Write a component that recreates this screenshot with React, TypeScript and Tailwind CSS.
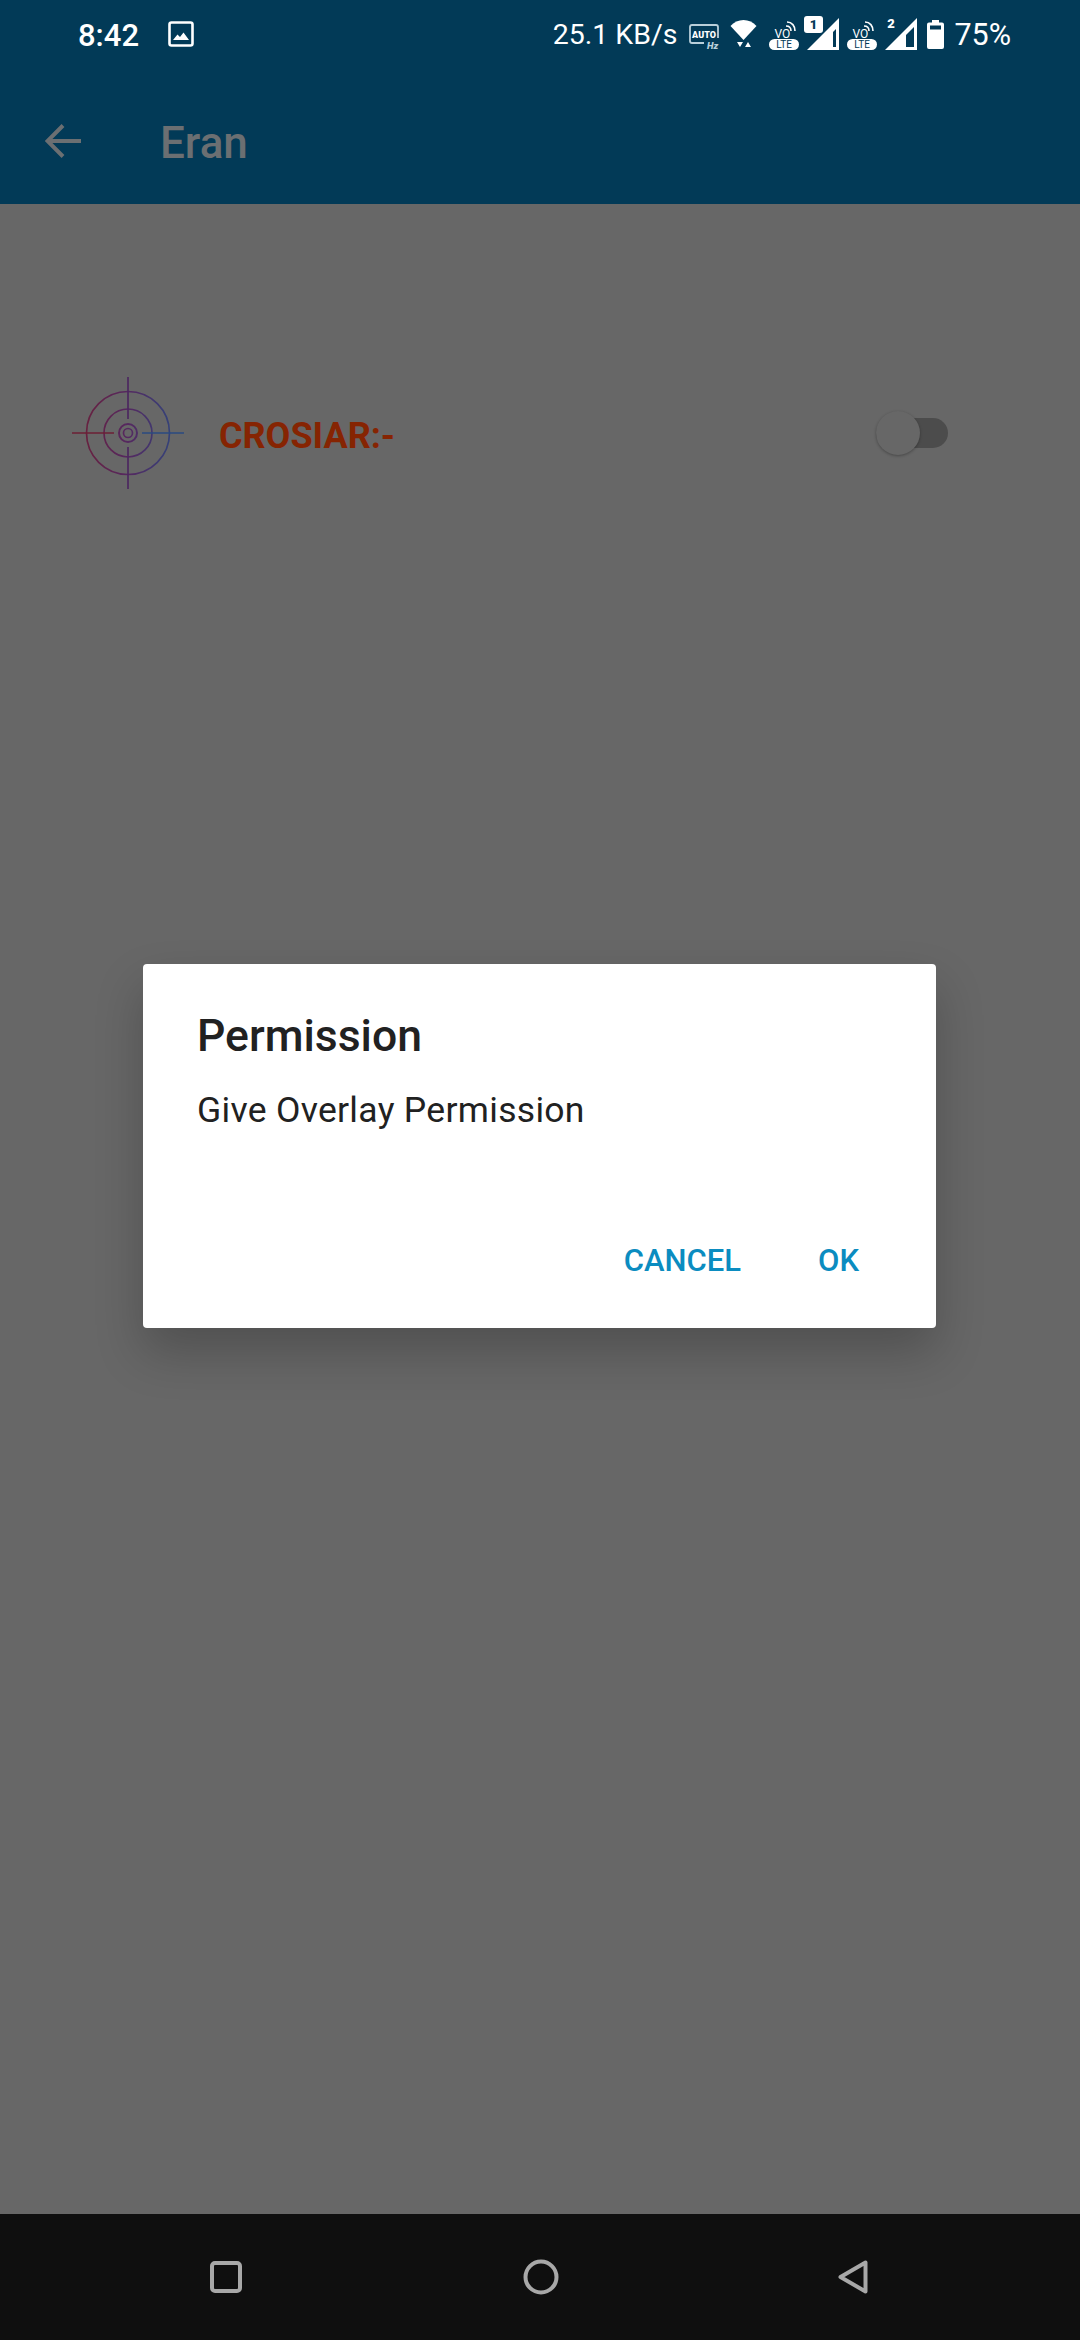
const roboto = "font-['Roboto',sans-serif]"

function ImageIcon() {
  return (
    <svg width="26" height="26" viewBox="0 0 26 26" fill="none">
      <rect x="1.5" y="1.5" width="23" height="23" rx="2" stroke="white" strokeWidth="2.6" />
      <path d="M5 19 L9.5 13.5 L12 16 L15.5 11.5 L21 19 Z" fill="white" />
    </svg>
  )
}

function AutoHzIcon() {
  return (
    <svg width="30" height="25" viewBox="0 0 30 25" fill="none">
      <path d="M15 19 H3 Q1 19 1 17 V3 Q1 1 3 1 H27 Q29 1 29 3 V14" stroke="#b9cfda" strokeWidth="1.8" />
      <text x="15" y="13.5" textAnchor="middle" fontSize="9" fontWeight="900" fontFamily="Roboto" fill="white">AUTO</text>
      <text x="18" y="24.5" fontSize="9.5" fontWeight="900" fontStyle="italic" fontFamily="Roboto" fill="#b9cfda">Hz</text>
    </svg>
  )
}

function WifiIcon() {
  return (
    <svg width="27" height="29" viewBox="0 0 27 29">
      <path d="M0.5 7 C7 -1 20 -1 26.5 7 L13.5 21 Z" fill="white" />
      <path d="M7 23 H13 L10 28 Z" fill="white" />
      <path d="M15 28 H21 L18 23 Z" fill="white" />
    </svg>
  )
}

function VolteIcon() {
  return (
    <svg width="30" height="31" viewBox="0 0 30 31" fill="none">
      <text x="5.5" y="18.5" fontSize="12" fontFamily="Roboto" fill="white">VO</text>
      <path d="M17 7 C20 7 22 9 22 12 M18 3 C23 3 26 7 26 12" stroke="white" strokeWidth="1.6" />
      <rect x="0" y="20" width="30" height="11" rx="5.5" fill="white" />
      <text x="15" y="29" textAnchor="middle" fontSize="10" fontFamily="Roboto" fill="#023a57">LTE</text>
    </svg>
  )
}

function SignalIcon({ slot, boxed, cutout }: { slot: string; boxed?: boolean; cutout: string }) {
  return (
    <svg width="36" height="35" viewBox="0 0 36 35">
      <path d="M3 34 L35 2 V34 Z" fill="white" />
      <path d={cutout} fill="#023a57" />
      {boxed ? <rect x="0" y="0" width="19" height="17" rx="3" fill="white" /> : null}
      <text
        x={boxed ? 9.5 : 9}
        y={boxed ? 13 : 12}
        textAnchor="middle"
        fontSize="13"
        fontWeight="900"
        fontFamily="Roboto"
        fill={boxed ? "#023a57" : "white"}
      >
        {slot}
      </text>
    </svg>
  )
}

function BatteryIcon() {
  return (
    <svg width="17" height="29" viewBox="0 0 17 29">
      <path d="M5 0 H12 V2.5 H15 Q17 2.5 17 4.5 V27 Q17 29 15 29 H2 Q0 29 0 27 V4.5 Q0 2.5 2 2.5 H5 Z" fill="white" />
      <rect x="3" y="5.5" width="11" height="4" fill="#023a57" />
    </svg>
  )
}

function StatusBar() {
  return (
    <div className={`flex h-[70px] items-center pl-[78px] pr-[69px] text-white ${roboto}`}>
      <span className="text-[31px] font-medium leading-none">8:42</span>
      <span className="ml-[29px] flex -translate-y-[1px]">
        <ImageIcon />
      </span>
      <div className="ml-auto flex items-center">
        <span className="mr-[12px] text-[28.5px] leading-none">25.1 KB/s</span>
        <span className="mr-[11px] flex translate-y-[1px]"><AutoHzIcon /></span>
        <span className="mr-[12px] flex -translate-y-[2px]"><WifiIcon /></span>
        <span className="mr-[5px] flex -translate-y-[1px]"><VolteIcon /></span>
        <span className="mr-[7px] flex -translate-y-[2px]"><SignalIcon slot="1" boxed cutout="M29 16 L32 13 V31 H29 Z" /></span>
        <span className="mr-[5px] flex -translate-y-[1px]"><VolteIcon /></span>
        <span className="mr-[9px] flex -translate-y-[2px]"><SignalIcon slot="2" cutout="M24 19 L32 11 V31 H24 Z" /></span>
        <span className="mr-[10px] flex -translate-y-[1px]"><BatteryIcon /></span>
        <span className="text-[30.5px] leading-none">75%</span>
      </div>
    </div>
  )
}

function AppBar() {
  return (
    <div className={`flex h-[134px] items-center pl-[45px] ${roboto}`}>
      <svg width="36" height="34" viewBox="0 0 36 34" fill="none" className="translate-y-[4px]">
        <path d="M36 17 H3 M18 1.5 L2.5 17 L18 32.5" stroke="#6b6f72" strokeWidth="4" />
      </svg>
      <span className="ml-[79px] translate-y-[6px] text-[44px] font-medium leading-none text-[#6b6f72]">Eran</span>
    </div>
  )
}

function Crosshair() {
  return (
    <svg width="112" height="112" viewBox="0 0 112 112" fill="none">
      <defs>
        <linearGradient id="cross" x1="0" y1="0" x2="112" y2="0" gradientUnits="userSpaceOnUse">
          <stop offset="0" stopColor="#6d1f35" />
          <stop offset="0.5" stopColor="#552860" />
          <stop offset="1" stopColor="#2a4a80" />
        </linearGradient>
      </defs>
      <g stroke="url(#cross)" strokeWidth="1.7">
        <circle cx="56" cy="56" r="41.5" />
        <circle cx="56" cy="56" r="24" />
        <circle cx="56" cy="56" r="9" strokeWidth="2" />
        <circle cx="56" cy="56" r="4.5" />
      </g>
      <g strokeWidth="1.7">
        <path d="M0 56 H42" stroke="#6d1f35" />
        <path d="M70 56 H112" stroke="#2a4a80" />
        <path d="M56 0 V42 M56 70 V112" stroke="#4d2860" />
      </g>
    </svg>
  )
}

function CrosiarRow() {
  return (
    <div className={`mt-[173px] flex items-center pl-[72px] pr-[132px] ${roboto}`}>
      <Crosshair />
      <span className="ml-[35px] translate-y-[3px] text-[36px] font-bold leading-none text-[#862402]">CROSIAR:-</span>
      <div className="ml-auto flex h-[30px] w-[72px] items-center rounded-full bg-[#4c4c4c]">
        <div className="h-[44px] w-[44px] rounded-full bg-[#676767] shadow-[0_1px_3px_rgba(0,0,0,0.3)]" />
      </div>
    </div>
  )
}

function PermissionDialog() {
  return (
    <div className={`absolute left-[143px] top-[964px] flex h-[364px] w-[793px] flex-col rounded-[4px] bg-white shadow-[0_24px_48px_rgba(0,0,0,0.22)] ${roboto}`}>
      <div className="pl-[54px] pt-[50px] text-[44.5px] font-medium leading-none text-[#212121]">Permission</div>
      <div className="pl-[54px] pt-[34px] text-[35.5px] leading-none tracking-[0.3px] text-[#212121]">Give Overlay Permission</div>
      <div className="mt-auto flex justify-end gap-[77px] pb-[52px] pr-[77px] text-[31px] font-medium leading-none text-[#0b8cc0]">
        <span>CANCEL</span>
        <span>OK</span>
      </div>
    </div>
  )
}

function NavBar() {
  return (
    <div className="flex h-[126px] items-center bg-[#0f0f0f]">
      <div className="flex w-full items-center pl-[210px]">
        <svg width="32" height="32" viewBox="0 0 32 32" fill="none">
          <rect x="2" y="2" width="28" height="28" rx="3" stroke="#a8a8a8" strokeWidth="4" />
        </svg>
        <svg width="36" height="36" viewBox="0 0 36 36" fill="none" className="ml-[281px]">
          <circle cx="18" cy="18" r="15.5" stroke="#a8a8a8" strokeWidth="4" />
        </svg>
        <svg width="30" height="34" viewBox="0 0 30 34" fill="none" className="ml-[279px]">
          <path d="M27.5 2.5 V31.5 L2.5 17 Z" stroke="#a8a8a8" strokeWidth="4" strokeLinejoin="round" />
        </svg>
      </div>
    </div>
  )
}

export default function App() {
  return (
    <div className="relative flex h-[2340px] w-[1080px] flex-col overflow-hidden bg-[#676767]">
      <div className="bg-[#023a57]">
        <StatusBar />
        <AppBar />
      </div>
      <div className="flex-1">
        <CrosiarRow />
      </div>
      <NavBar />
      <PermissionDialog />
    </div>
  )
}
